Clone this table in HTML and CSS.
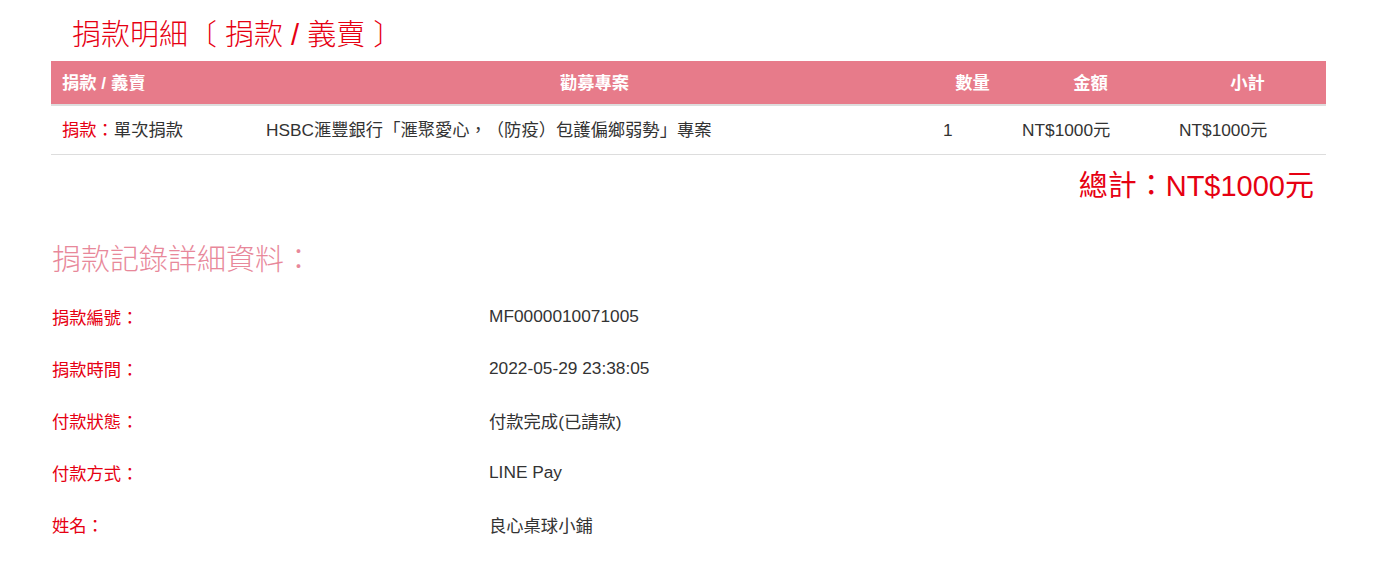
FILE: index.html
```html
<!DOCTYPE html>
<html lang="zh-Hant">
<head>
<meta charset="utf-8">
<link rel="stylesheet" href="styles.css">
</head>
<body>
<div class="page">
  <h1 class="title">捐款明細〔 捐款 / 義賣 〕</h1>
  <div class="table">
    <div class="row head">
      <div class="c1 left">捐款 / 義賣</div>
      <div class="c2">勸募專案</div>
      <div class="c3">數量</div>
      <div class="c4">金額</div>
      <div class="c5">小計</div>
    </div>
    <div class="row body">
      <div class="c1"><span class="red">捐款：</span>單次捐款</div>
      <div class="c2">HSBC滙豐銀行「滙聚愛心，（防疫）包護偏鄉弱勢」專案</div>
      <div class="c3">1</div>
      <div class="c4">NT$1000元</div>
      <div class="c5">NT$1000元</div>
    </div>
  </div>
  <div class="total">總計：<span class="amt">NT$1000元</span></div>

  <h2 class="sub">捐款記錄詳細資料：</h2>
  <div class="details">
    <div class="lab">捐款編號：</div><div class="val">MF0000010071005</div>
    <div class="lab">捐款時間：</div><div class="val">2022-05-29 23:38:05</div>
    <div class="lab">付款狀態：</div><div class="val">付款完成(已請款)</div>
    <div class="lab">付款方式：</div><div class="val">LINE Pay</div>
    <div class="lab">姓名：</div><div class="val">良心桌球小鋪</div>
  </div>
</div>
</body>
</html>
```

FILE: styles.css
```css
html, body {
  margin: 0;
  padding: 0;
  background: #fff;
}
body {
  font-family: "Liberation Sans", "Noto Sans CJK TC", sans-serif;
  color: #333;
  font-size: 17.3px;
  text-spacing-trim: space-all;
}
.page {
  width: 1275px;
  margin-left: 51px;
}
.title {
  margin: 0;
  padding: 17px 0 0 21px;
  height: 61px;
  box-sizing: border-box;
  font-size: 29px;
  line-height: 36px;
  font-weight: 300;
  color: #e60012;
}
.row {
  display: grid;
  grid-template-columns: 205px 677px 79px 157px 157px;
  align-items: baseline;
  line-height: 24px;
  box-sizing: border-box;
}
.head {
  background: #e77b8a;
  color: #fff;
  font-weight: bold;
  height: 45px;
  padding-top: 10px;
  border-bottom: 2px solid #ddd;
}
.head > div {
  text-align: center;
}
.head > .left {
  text-align: left;
  padding-left: 11px;
}
.body {
  height: 49px;
  padding-top: 12px;
  border-bottom: 1px solid #ddd;
}
.body > div {
  padding-left: 10px;
}
.body > .c1 {
  padding-left: 11px;
}
.red {
  color: #e60012;
}
.total {
  text-align: right;
  padding-right: 12px;
  font-size: 29px;
  line-height: 36px;
  margin-top: 13px;
  color: #e60012;
}
.amt {
  font-weight: normal;
}
.sub {
  margin: 38px 0 0 1px;
  font-size: 29px;
  line-height: 36px;
  font-weight: 300;
  color: #e8889a;
}
.details {
  display: grid;
  grid-template-columns: 437px 1fr;
  grid-auto-rows: 52px;
  align-items: center;
  margin-top: 12px;
  margin-left: 1px;
}
.lab {
  color: #e60012;
}
.val {
  color: #333;
}
```
